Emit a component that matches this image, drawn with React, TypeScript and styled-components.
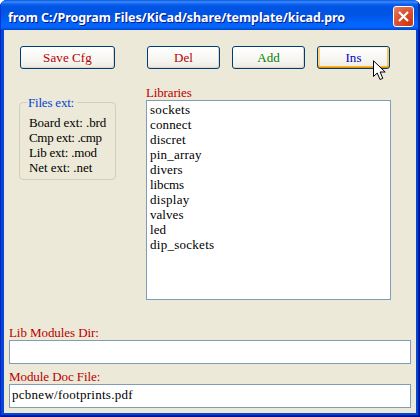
import React from "react";
import styled, { createGlobalStyle } from "styled-components";

const GlobalStyle = createGlobalStyle`
  * { box-sizing: border-box; }
  body { margin: 0; background: #fff; overflow: hidden; }
`;

const Window = styled.div`
  position: relative;
  width: 420px;
  height: 417px;
  display: flex;
  flex-direction: column;
  padding: 0 4px 4px;
  overflow: hidden;
  border-radius: 7px 7px 0 0;
  background: #0546d8;
  box-shadow: inset 1px 0 #0822c4, inset -1px -1px #00138c, inset -2px -2px #001ea0;
  font: 13px/15px "Liberation Serif", serif;
  color: #000;
`;

const TitleBar = styled.header`
  height: 30px;
  flex: none;
  margin: 0 -4px;
  padding: 6px 6px 0 8px;
  display: flex;
  justify-content: space-between;
  align-items: flex-start;
  background: linear-gradient(
    #0a55dc 0, #3a8cff 2px, #0f62ee 4px, #0054e3 7px, #0055e5 15px,
    #0262fa 22px, #0366ff 27px, #0050dc 29px, #0040c0 30px
  );
  box-shadow: inset 1px 0 #0831d9, inset -2px 0 #0030a8;
`;

const Title = styled.h1`
  margin: 3px 0 0;
  font: bold 12.5px/18px "Noto Sans", sans-serif;
  letter-spacing: -0.08px;
  white-space: nowrap;
  color: #fff;
  text-shadow: 1px 1px #0a1883;
`;

const CloseButton = styled.button`
  width: 21px;
  height: 21px;
  padding: 0;
  display: grid;
  place-items: center;
  border: 1px solid #fff;
  border-radius: 3px;
  background: radial-gradient(circle at 80% 90%, #cc3810, #dc5030 55%, #e88468 100%);
`;

const Client = styled.main`
  flex: 1;
  display: flex;
  flex-direction: column;
  padding: 16px 5px 5px;
  background: #ece9d8;
`;

const Toolbar = styled.div`
  display: flex;
  gap: 12px;
  padding-left: 11px;
`;

const PushButton = styled.button<{ $color: string; $wide?: boolean; $hot?: boolean }>`
  width: ${(p) => (p.$wide ? 95 : 73)}px;
  height: 23px;
  margin-right: ${(p) => (p.$wide ? 20 : 0)}px;
  padding: 0;
  border: 1px solid #003c74;
  border-radius: 3px;
  font: 13px/19px "Liberation Serif", serif;
  letter-spacing: 0.1px;
  color: ${(p) => p.$color};
  background: linear-gradient(#fff, #f5f4ef 70%, #ebe8df);
  box-shadow: ${(p) =>
    p.$hot
      ? "inset 0 1px #fff0cf, inset 0 -1px #e59700, inset 0 -2px #f8b330, inset 2px 0 #fbd281, inset -2px 0 #f8c560"
      : "inset -1px -1px #dcd7cb"};
`;

const Middle = styled.div`
  display: flex;
  align-items: flex-start;
  padding: 17px 0 0 10px;
`;

const FilesGroup = styled.fieldset`
  width: 97px;
  height: 85px;
  margin: 9px 30px 0 0;
  padding: 5px 0 0 9px;
  border: 1px solid #d0d0bf;
  border-radius: 4px;
`;

const Legend = styled.legend`
  margin-left: -2px;
  padding: 0 3px 0 1px;
  line-height: 15px;
  letter-spacing: -0.2px;
  color: #0046d5;
`;

const Extension = styled.div<{ $spacing: number }>`
  white-space: nowrap;
  letter-spacing: ${(p) => p.$spacing}px;
`;

const Label = styled.label<{ $spacing?: number }>`
  display: block;
  height: 14px;
  line-height: 14px;
  letter-spacing: ${(p) => p.$spacing ?? -0.07}px;
  color: #b80000;
`;

const ListBox = styled.ul`
  width: 245px;
  height: 200px;
  margin: 0;
  padding: 1px 3px;
  list-style: none;
  border: 1px solid #7f9db9;
  background: #fff;
`;

const ListItem = styled.li<{ $spacing: number }>`
  height: 15px;
  letter-spacing: ${(p) => p.$spacing}px;
`;

const Fields = styled.div`
  display: flex;
  flex-direction: column;
  gap: 6px;
  margin-top: auto;
`;

const TextInput = styled.input`
  display: block;
  width: 402px;
  height: 24px;
  padding: 0 2px 2px;
  border: 1px solid #7f9db9;
  border-radius: 0;
  outline: none;
  background: #fff;
  color: #000;
  font: 13px "Liberation Serif", serif;
  letter-spacing: 0.27px;
`;

const Pointer = styled.svg`
  position: absolute;
  left: 373px;
  top: 60px;
  pointer-events: none;
`;

const extensions: [string, number][] = [
  ["Board ext: .brd", -0.07],
  ["Cmp ext: .cmp", -0.32],
  ["Lib ext: .mod", -0.2],
  ["Net ext: .net", -0.05],
];

const libraries: [string, number][] = [
  ["sockets", 0.3],
  ["connect", 0.15],
  ["discret", 0.15],
  ["pin_array", 0.2],
  ["divers", 0.15],
  ["libcms", -0.1],
  ["display", 0.3],
  ["valves", 0.05],
  ["led", 0.1],
  ["dip_sockets", 0.27],
];

export default function App() {
  return (
    <>
      <GlobalStyle />
      <Window>
        <TitleBar>
          <Title>from C:/Program Files/KiCad/share/template/kicad.pro</Title>
          <CloseButton aria-label="Close">
            <svg width="13" height="13" viewBox="0 0 13 13">
              <path d="M2 2 11 11M11 2 2 11" stroke="#fff" strokeWidth="2.2" />
            </svg>
          </CloseButton>
        </TitleBar>
        <Client>
          <Toolbar>
            <PushButton $color="#b80000" $wide>Save Cfg</PushButton>
            <PushButton $color="#b80000">Del</PushButton>
            <PushButton $color="#008000">Add</PushButton>
            <PushButton $color="#0000c0" $hot>Ins</PushButton>
          </Toolbar>
          <Middle>
            <FilesGroup>
              <Legend>Files ext:</Legend>
              {extensions.map(([text, spacing]) => (
                <Extension key={text} $spacing={spacing}>{text}</Extension>
              ))}
            </FilesGroup>
            <div>
              <Label $spacing={-0.15}>Libraries</Label>
              <ListBox>
                {libraries.map(([text, spacing]) => (
                  <ListItem key={text} $spacing={spacing}>{text}</ListItem>
                ))}
              </ListBox>
            </div>
          </Middle>
          <Fields>
            <div>
              <Label htmlFor="modules-dir">Lib Modules Dir:</Label>
              <TextInput id="modules-dir" defaultValue="" />
            </div>
            <div>
              <Label htmlFor="doc-file">Module Doc File:</Label>
              <TextInput id="doc-file" defaultValue="pcbnew/footprints.pdf" />
            </div>
          </Fields>
        </Client>
        <Pointer width="14" height="21" viewBox="0 0 14 21">
          <path
            d="M.5 .8V16.5L4.2 13 7 19.5 9.8 18.3 7.1 12H12.2Z"
            fill="#fff"
            stroke="#000"
            strokeWidth="1"
          />
        </Pointer>
      </Window>
    </>
  );
}
